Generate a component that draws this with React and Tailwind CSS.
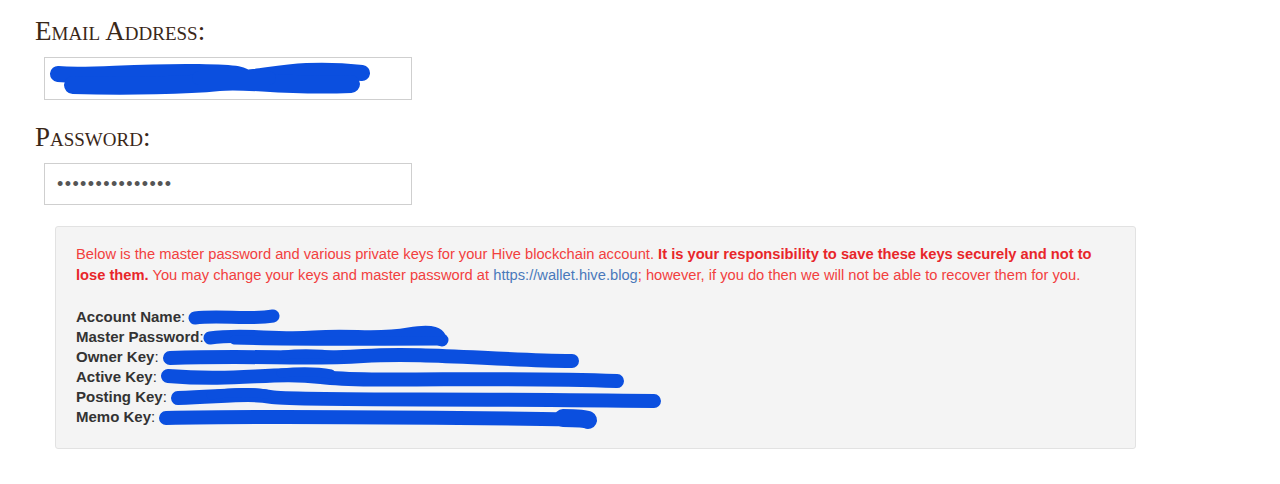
import React from "react";

const BLUE = "#0b4fdf";

// redaction marker strokes drawn over the hidden values
function Scribble({ width, height = 20, paths, className = "" }) {
  return (
    <svg width={width} height={height} viewBox={`0 0 ${width} ${height}`}
      className={`inline-block align-middle overflow-visible ${className}`}>
      {paths.map(([d, w], i) => (
        <path key={i} d={d} fill="none" stroke={BLUE} strokeWidth={w} strokeLinecap="round" strokeLinejoin="round" />
      ))}
    </svg>
  );
}

const KEYS = [
  { label: "Account Name", width: 90, paths: [["M6 10 C 30 7, 60 12, 84 8", 13]] },
  { label: "Master Password", width: 245, noSpace: true, paths: [["M6 10 C 40 5, 70 12, 110 9 S 170 12, 205 6 S 234 12, 238 12", 13], ["M30 12 C 90 14, 160 13, 236 13", 9]] },
  { label: "Owner Key", width: 416, paths: [["M7 10 C 100 7, 140 12, 200 8 S 330 12, 409 13", 14], ["M120 7 C 140 5, 160 6, 175 8", 9]] },
  { label: "Active Key", width: 463, paths: [["M7 8 C 80 14, 110 3, 160 9 S 330 8, 456 13", 14], ["M120 5 C 140 3, 160 4, 170 6", 9]] },
  { label: "Posting Key", width: 490, paths: [["M7 10 C 60 8, 80 5, 100 9 S 300 10, 483 13", 14], ["M40 7 C 60 4, 80 4, 95 6", 9]] },
  { label: "Memo Key", width: 438, paths: [["M7 10 C 100 8, 200 9, 300 10 S 410 12, 427 11", 14], ["M404 10 C 419 10, 427 11, 429 12", 18]] },
];

const serif = { fontFamily: "'Liberation Serif', 'DejaVu Serif', serif" };

export default function App() {
  return (
    <div className="min-h-screen bg-white pl-[35px] pt-[14px]" style={{ fontFamily: "Arial, 'Liberation Sans', sans-serif" }}>
      <div className="text-[27px] leading-[35px] text-[#3a2718] [font-variant:small-caps]" style={serif}>
        Email Address:
      </div>
      <div className="ml-[9px] mt-[8px] w-[368px] h-[43px] border border-[#cfcfcf] bg-white flex items-center pl-[4px]">
        <Scribble width={320} height={32} paths={[
          ["M9 11 C 40 14, 80 8, 150 9 S 180 17, 205 14 S 260 4, 313 10", 16],
          ["M24 22 C 80 24, 140 22, 170 19 S 230 24, 302 21", 18],
          ["M150 15 L 220 15", 14],
        ]} />
      </div>

      <div className="mt-[20px] text-[27px] leading-[35px] text-[#3a2718] [font-variant:small-caps]" style={serif}>
        Password:
      </div>
      <div className="ml-[9px] mt-[8px] w-[368px] h-[42px] border border-[#cfcfcf] bg-white flex items-center pl-[12px]">
        <span className="text-[18px] leading-none tracking-[1.4px] text-[#555]">•••••••••••••••</span>
      </div>

      <div className="ml-[20px] mt-[21px] w-[1081px] bg-[#f4f4f4] border border-[#e2e2e2] rounded-[3px] pl-[20px] pr-[20px] pt-[17px] pb-[21px] text-[14.7px]">
        <p className="leading-[21px] text-[#f2403e]">
          Below is the master password and various private keys for your Hive blockchain account.{" "}
          <b className="text-[#e8262a]">It is your responsibility to save these keys securely and not to lose them.</b>{" "}
          You may change your keys and master password at{" "}
          <a className="text-[#4a79bb]">https://wallet.hive.blog</a>; however, if you do then we will not be able to recover them for you.
        </p>
        <div className="mt-[21px] text-[#333] text-[15px]">
          {KEYS.map((k) => (
            <div key={k.label} className="leading-[20px] h-[20px] whitespace-nowrap">
              <b>{k.label}</b>:{k.noSpace ? "" : " "}
              <Scribble width={k.width} paths={k.paths} />
            </div>
          ))}
        </div>
      </div>
    </div>
  );
}
